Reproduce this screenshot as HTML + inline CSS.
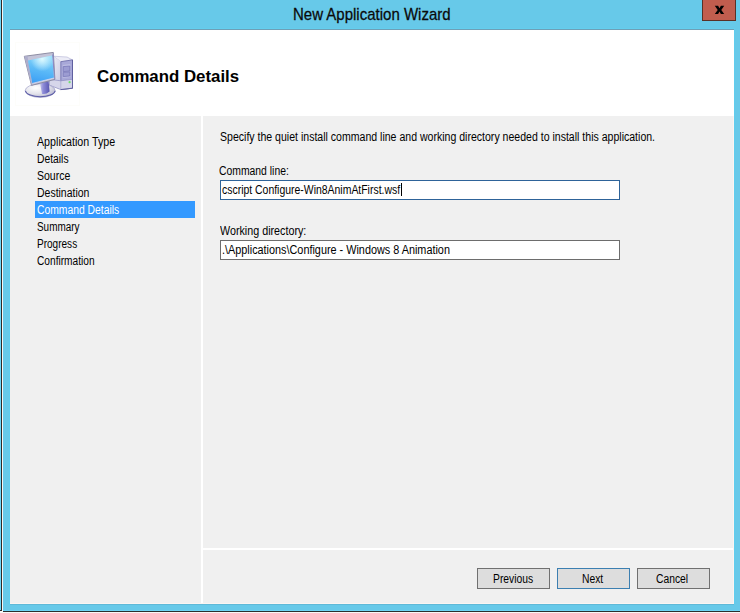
<!DOCTYPE html>
<html><head><meta charset="utf-8">
<style>
html,body{margin:0;padding:0;}
body{width:740px;height:613px;position:relative;overflow:hidden;background:#f7f7f7;font-family:"Liberation Sans",sans-serif;}
.a{position:absolute;}
.t{position:absolute;white-space:nowrap;font-size:12px;line-height:12px;color:#000;transform-origin:0 0;}
</style></head><body>
<!-- window frame -->
<div class="a" style="left:0;top:0;width:740px;height:611px;background:#67c9e9;"></div>
<div class="a" style="left:3px;top:610px;width:737px;height:1px;background:#6dd4f6;"></div>
<div class="a" style="left:0;top:0;width:1px;height:610px;background:#6ed6f8;"></div>
<div class="a" style="left:1px;top:0;width:1px;height:611px;background:#2e2a28;"></div>
<div class="a" style="left:2px;top:0;width:1px;height:612px;background:#f6f6f6;"></div>
<div class="a" style="left:0;top:610px;width:2px;height:1px;background:#2e2a28;"></div>
<div class="a" style="left:3px;top:611px;width:737px;height:1px;background:#2e2e2e;"></div>
<div class="a" style="left:0;top:612px;width:740px;height:1px;background:#f7f7f7;"></div>
<!-- title -->
<div class="t" style="left:293px;top:6px;font-size:15px;line-height:15px;color:#0a0a0a;transform:scaleY(1.06);-webkit-text-stroke:0.25px #0a0a0a;">New Application Wizard</div>
<!-- close button -->
<div class="a" style="left:702px;top:-1px;width:32px;height:20px;background:#c15d4e;border:1px solid #5a3026;"></div>
<svg class="a" style="left:714px;top:5px;" width="12" height="11" viewBox="0 0 12 11"><path d="M0.8 0.8 L4.1 0.8 L5.5 3.2 L6.9 0.8 L10.2 0.8 L7.3 4.9 L10.2 9 L6.9 9 L5.5 6.6 L4.1 9 L0.8 9 L3.7 4.9 Z" fill="#000"/></svg>
<!-- content border -->
<div class="a" style="left:9px;top:28px;width:726px;height:1px;background:#63ceee;"></div>
<div class="a" style="left:10px;top:29px;width:724px;height:1px;background:#6e9fb6;"></div>
<div class="a" style="left:9px;top:29px;width:1px;height:575px;background:#5fcdee;"></div>
<div class="a" style="left:734px;top:29px;width:1px;height:575px;background:#5fcdee;"></div>
<div class="a" style="left:10px;top:604px;width:724px;height:1px;background:#5fb9d8;"></div>
<!-- content -->
<div class="a" style="left:10px;top:30px;width:724px;height:574px;background:#ffffff;"></div>
<div class="a" style="left:10px;top:116px;width:191px;height:488px;background:#f0f0f0;"></div>
<div class="a" style="left:203px;top:116px;width:531px;height:432px;background:#f0f0f0;"></div>
<div class="a" style="left:203px;top:550px;width:531px;height:54px;background:#f0f0f0;"></div>
<div class="a" style="left:10px;top:603px;width:724px;height:1px;background:#faf5f3;"></div>
<div class="a" style="left:733px;top:116px;width:1px;height:488px;background:#faf5f3;"></div>
<!-- header -->
<div class="a" style="left:15px;top:42px;width:63px;height:62px;border:1px solid #fdfdfa;"></div>
<svg class="a" style="left:10px;top:35px;" width="80" height="80" viewBox="0 0 80 80">
 <defs>
  <linearGradient id="scr" x1="0.5" y1="0" x2="0.3" y2="1">
   <stop offset="0" stop-color="#8ad8fb"/><stop offset="0.5" stop-color="#5cbaf7"/><stop offset="1" stop-color="#3b9ef5"/>
  </linearGradient>
  <radialGradient id="hl" cx="0.55" cy="0.12" r="0.45">
   <stop offset="0" stop-color="#e4fcff" stop-opacity="0.95"/><stop offset="1" stop-color="#e4fcff" stop-opacity="0"/>
  </radialGradient>
  <linearGradient id="side" x1="0" y1="0" x2="1" y2="1">
   <stop offset="0" stop-color="#f2f2fa"/><stop offset="1" stop-color="#c6c6e0"/>
  </linearGradient>
  <linearGradient id="front" x1="0" y1="0" x2="1" y2="0">
   <stop offset="0" stop-color="#a6a6d8"/><stop offset="1" stop-color="#8282c4"/>
  </linearGradient>
  <radialGradient id="bse" cx="0.35" cy="0.3" r="0.8">
   <stop offset="0" stop-color="#ffffff"/><stop offset="0.55" stop-color="#e2e2ea"/><stop offset="1" stop-color="#b0b0cc"/>
  </radialGradient>
  <linearGradient id="neck" x1="0" y1="0" x2="1" y2="0">
   <stop offset="0" stop-color="#c8c8ec"/><stop offset="0.35" stop-color="#8e8cd8"/><stop offset="1" stop-color="#5856b0"/>
  </linearGradient>
 </defs>
 <!-- tower -->
 <path d="M43.1 21.2 L57 22 L62.5 24.9 L50.8 26.7 Z" fill="#ececf6" stroke="#a4a4cc" stroke-width="0.5"/>
 <path d="M39.4 22 L43.1 21.2 L50.8 26.7 L50.8 54.6 L39.4 50.2 Z" fill="url(#side)"/>
 <path d="M50.8 26.7 L62.5 24.9 L62.5 53.2 L50.8 54.6 Z" fill="#a8a8d8" stroke="#6a6aa8" stroke-width="0.8"/>
 <path d="M52.6 29.9 L60.4 29 L60.4 42.1 L52.6 43 Z" fill="#bcbce2"/>
 <path d="M53.2 31.6 L59.8 31 L59.8 36 L53.2 36.6 Z" fill="#9c9cd2" stroke="#6c6cb0" stroke-width="0.6"/>
 <path d="M53.2 37.4 L59.8 36.8 L59.8 41 L53.2 41.6 Z" fill="#9c9cd2" stroke="#6c6cb0" stroke-width="0.6"/>
 <path d="M39.4 44.3 L50.8 45.8 L62.5 44.3 L62.5 53.2 L50.8 54.6 L39.4 50.2 Z" fill="#d6d6ea" stroke="#8080b8" stroke-width="0.6"/>
 <path d="M50.8 45.8 L50.8 54.6" stroke="#9a9ac8" stroke-width="0.6"/>
 <path d="M50.8 54.6 L62.5 53.2 L62.5 24.9" stroke="#5c5c9c" stroke-width="0.9" fill="none"/>
 <circle cx="59.6" cy="47.2" r="1.1" fill="#6ee06e"/>
 <!-- base -->
 <ellipse cx="30.2" cy="55.6" rx="15" ry="6.8" fill="url(#bse)" stroke="#9a9ac6" stroke-width="0.6"/>
 <path d="M15.4 55.8 A15 6.8 0 0 0 45.2 55.8" fill="none" stroke="#5e5ea8" stroke-width="1.1"/>
 <path d="M29.8 47 L38.5 44.3 L39.6 56.5 Q36 59.8 32 58.9 Z" fill="url(#neck)"/>
 <!-- monitor bezel -->
 <path d="M14.3 21.3 L43.3 17.4 L44.9 44.4 L21.5 50.4 Z" fill="#c4c4d8" stroke="#84849c" stroke-width="0.9"/>
 <path d="M14.3 21.3 L17.5 20.9 L21.8 48.6 L21.5 50.4 Z" fill="#aeaecc"/>
 <path d="M42.1 20.6 L43.3 17.4 L44.9 44.4 L43.9 43 Z" fill="#8a8ac6"/>
 <path d="M17.9 25.6 L42.1 20.6 L43.9 43 L22.3 48.4 Z" fill="url(#scr)"/>
 <path d="M17.9 25.6 L42.1 20.6 L43.9 43 L22.3 48.4 Z" fill="url(#hl)"/>
 <path d="M22.3 48.4 L43.9 43" stroke="#e8e0f0" stroke-width="0.7"/>
</svg>
<div class="t" style="left:97px;top:68px;font-size:17px;line-height:17px;font-weight:bold;transform:scaleX(0.99);">Command Details</div>
<!-- nav -->
<div class="a" style="left:35px;top:201px;width:160px;height:17px;background:#3399ff;"></div>
<div class="t" style="left:37px;top:136px;transform:scaleX(0.89);">Application Type</div>
<div class="t" style="left:37px;top:153px;transform:scaleX(0.86);">Details</div>
<div class="t" style="left:37px;top:170px;transform:scaleX(0.876);">Source</div>
<div class="t" style="left:37px;top:187px;transform:scaleX(0.873);">Destination</div>
<div class="t" style="left:36.5px;top:204px;transform:scaleX(0.862);color:#fff;">Command Details</div>
<div class="t" style="left:37px;top:221px;transform:scaleX(0.827);">Summary</div>
<div class="t" style="left:37px;top:238px;transform:scaleX(0.836);">Progress</div>
<div class="t" style="left:37px;top:255px;transform:scaleX(0.847);">Confirmation</div>
<!-- right -->
<div class="t" style="left:220px;top:131px;transform:scaleX(0.879);">Specify the quiet install command line and working directory needed to install this application.</div>
<div class="t" style="left:219px;top:165px;transform:scaleX(0.865);">Command line:</div>
<div class="a" style="left:220px;top:180px;width:398px;height:18px;background:#fff;border:1px solid #2e6399;"></div>
<div class="t" style="left:222px;top:184px;transform:scaleX(0.87);">cscript Configure-Win8AnimAtFirst.wsf</div>
<div class="a" style="left:401px;top:183px;width:1px;height:13px;background:#000;"></div>
<div class="t" style="left:220px;top:225px;transform:scaleX(0.895);">Working directory:</div>
<div class="a" style="left:220px;top:240px;width:398px;height:18px;background:#fff;border:1px solid #6d6d6d;"></div>
<div class="t" style="left:222px;top:244px;transform:scaleX(0.904);">.\Applications\Configure - Windows 8 Animation</div>
<!-- buttons -->
<div class="a" style="left:477px;top:568px;width:71px;height:19px;background:#dddddd;border:1px solid #707070;"></div>
<div class="a" style="left:557px;top:568px;width:71px;height:19px;background:#dddddd;border:1px solid #3c7fb1;"></div>
<div class="a" style="left:637px;top:568px;width:71px;height:19px;background:#dddddd;border:1px solid #707070;"></div>
<div class="t" style="left:492.6px;top:573px;transform:scaleX(0.86);">Previous</div>
<div class="t" style="left:582.2px;top:573px;transform:scaleX(0.86);">Next</div>
<div class="t" style="left:655.5px;top:573px;transform:scaleX(0.86);">Cancel</div>
</body></html>
